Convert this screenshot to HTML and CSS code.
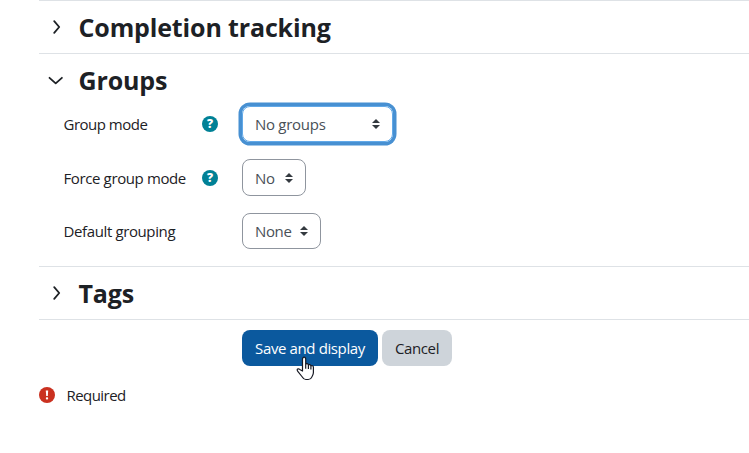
FILE: index.html
```html
<!DOCTYPE html>
<html lang="en">
<head>
<meta charset="utf-8">
<title>Group settings</title>
<link rel="stylesheet" href="styles.css">
</head>
<body>
<form class="settings">
  <section class="section">
    <h2 class="heading"><svg class="chevron" viewBox="0 0 18 18"><path d="M7.2 3.2l5 5.8-5 5.8"/></svg><span class="title">Completion tracking</span></h2>
  </section>
  <section class="section section-open">
    <h2 class="heading"><svg class="chevron" viewBox="0 0 18 18"><path d="M2.5 6.8l6.2 5.6 6.2-5.6"/></svg><span class="title">Groups</span></h2>
    <div class="row">
      <span class="label label-mode">Group mode</span><span class="help">?</span>
      <div class="select select-wide focused"><span>No groups</span><svg class="arrows" viewBox="0 0 8 10"><path d="M4 0l4 4H0zM4 10l4-4H0z"/></svg></div>
    </div>
    <div class="row row-force">
      <span class="label">Force group mode</span><span class="help">?</span>
      <div class="select select-no"><span>No</span><svg class="arrows" viewBox="0 0 8 10"><path d="M4 0l4 4H0zM4 10l4-4H0z"/></svg></div>
    </div>
    <div class="row">
      <span class="label">Default grouping</span><span class="help-space"></span>
      <div class="select select-none"><span>None</span><svg class="arrows" viewBox="0 0 8 10"><path d="M4 0l4 4H0zM4 10l4-4H0z"/></svg></div>
    </div>
  </section>
  <section class="section">
    <h2 class="heading"><svg class="chevron" viewBox="0 0 18 18"><path d="M7.2 3.2l5 5.8-5 5.8"/></svg><span class="title">Tags</span></h2>
  </section>
  <div class="actions">
    <button type="button" class="btn primary">Save and display</button>
    <button type="button" class="btn secondary">Cancel</button>
  </div>
  <div class="required">
    <svg class="alert" viewBox="0 0 16 16"><circle cx="8" cy="8" r="8"/><path d="M6.8 3.5h2.4l-.4 5.6H7.2z"/><rect x="6.9" y="10.3" width="2.2" height="2.2" rx=".8"/></svg>
    <span class="required-text">Required</span>
  </div>
</form>
<svg class="cursor" viewBox="0 0 19 25"><path d="M6.5 15V3.2c0-2.8 3.2-2.8 3.2 0v5.3c.3-1.3 2.5-1 2.7.6.7-1 2.3-.4 2.5.9 1-.8 2.5-.1 2.5 1.2v5.3c0 2.1-1 3.2-1.6 4.6-.6 1.5-1.6 2.4-3.6 2.4H9.8c-1.8 0-2.7-1.1-3.5-2.5l-4.5-5.7c-1.6-2.1.4-3.2 2-1.9zM9.7 8.5v4.2M12.4 9v4M14.9 10v3.4"/></svg>
</body>
</html>
```

FILE: styles.css
```css
* { box-sizing: border-box; }
body {
  margin: 0;
  height: 453px;
  overflow: hidden;
  background: #fff;
  color: #1d2125;
  font: 15px/22px "Open Sans", "Noto Sans", sans-serif;
  letter-spacing: -.38px;
}
.settings { padding-left: 39px; }
.section { height: 53px; border-top: 1px solid #dee2e6; }
.section-open { height: 213px; }
.section:nth-of-type(3) { border-bottom: 1px solid #dee2e6; height: 54px; }
.heading {
  display: flex;
  align-items: center;
  height: 52px;
  margin: 0;
  padding-left: 8px;
  font-size: 25px;
  line-height: 32px;
  font-weight: 700;
  letter-spacing: -.14px;
}
.title { margin-left: 13.5px; white-space: nowrap; }
.chevron { width: 18px; height: 18px; fill: none; stroke: #1d2125; stroke-width: 1.8; stroke-linecap: round; stroke-linejoin: round; }
.row { display: flex; align-items: center; height: 36px; margin-bottom: 17px; padding-left: 24.5px; }
.row-force { height: 37px; }
.label { width: 138.5px; white-space: nowrap; }
.label-mode { letter-spacing: -.5px; }
.help, .help-space { width: 16px; height: 16px; margin-right: 24px; }
.help { border-radius: 50%; background: #008196; color: #fff; font: 800 12px/16px "Open Sans", sans-serif; letter-spacing: 0; text-align: center; }
.select {
  display: flex;
  align-items: center;
  justify-content: space-between;
  height: 100%;
  padding: 0 12px;
  border: 1px solid #8f959e;
  border-radius: 8px;
  color: #495057;
  white-space: nowrap;
}
.focused { border-color: #62a9e8; box-shadow: 0 0 0 3.5px #4790d2; letter-spacing: -.28px; }
.select-wide { width: 151px; }
.select-no { width: 64px; }
.select-none { width: 79px; }
.arrows { width: 8px; height: 10px; fill: #343a40; }
.actions { display: flex; gap: 4px; padding: 10px 0 0 203px; }
.btn { height: 36px; padding: 0; border: 0; border-radius: 8px; font: inherit; letter-spacing: inherit; white-space: nowrap; }
.primary { width: 136px; background: #0b599e; color: #fff; }
.secondary { width: 70px; background: #ced4da; color: #1d2125; }
.required { display: flex; align-items: center; height: 22px; margin-top: 18px; }
.alert { width: 16px; height: 16px; margin-left: -.5px; fill: #fff; }
.alert circle { fill: #ca3120; }
.required-text { margin-left: 12px; letter-spacing: -.55px; }
.cursor { position: absolute; left: 296px; top: 356px; width: 19px; height: 25px; fill: #fff; stroke: #171923; stroke-width: 1.2; stroke-linejoin: round; }
```
